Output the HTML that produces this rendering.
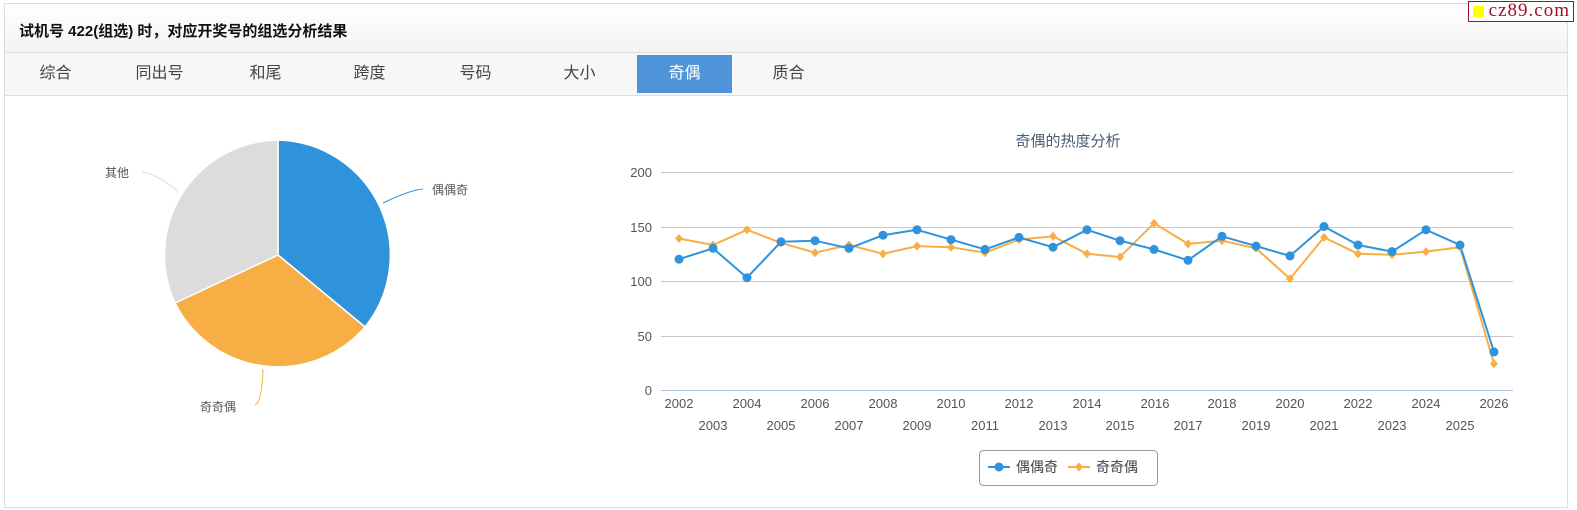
<!DOCTYPE html>
<html><head><meta charset="utf-8"><style>
body{margin:0;width:1577px;height:510px;background:#fff;font-family:"Liberation Sans","Noto Sans CJK SC",sans-serif;position:relative;overflow:hidden}
.box{position:absolute;left:4px;top:3px;width:1562px;height:503px;border:1px solid #ddd;}
.hd{position:absolute;left:0;top:0;width:1562px;height:48px;background:linear-gradient(#fff,#f3f3f3);border-bottom:1px solid #ddd}
.hd b{position:absolute;left:14px;top:16px;font-size:15px;color:#111}
.tabs{position:absolute;left:0;top:49px;width:1562px;height:42px;background:#f7f7f7;border-bottom:1px solid #ddd}
.tabs span{position:absolute;top:2px;height:38px;line-height:38px;font-size:16px;color:#444;text-align:center;width:95px}
.tabs .on{background:#4f94d8;color:#fff}
.logo{position:absolute;right:3px;top:1px;border:1px solid #a0102a;background:#fff;color:#a0102a;font-family:"Liberation Serif",serif;font-size:19px;height:19px;line-height:18px;padding:0 3px 0 20px;letter-spacing:1px}
.logo i{position:absolute;left:4px;top:4px;width:11px;height:11px;background:#ff0}
</style></head><body>
<div class="box">
<div class="hd"><b>试机号 422(组选) 时，对应开奖号的组选分析结果</b></div>
<div class="tabs">
<span style="left:3px">综合</span><span style="left:107px">同出号</span><span style="left:213px">和尾</span><span style="left:317px">跨度</span><span style="left:423px">号码</span><span style="left:527px">大小</span><span class="on" style="left:632px">奇偶</span><span style="left:736px">质合</span>
</div>
</div>
<div class="logo"><i></i>cz89.com</div>
<svg width="1577" height="510" style="position:absolute;left:0;top:0" font-family="Liberation Sans, Noto Sans CJK SC, sans-serif">
<path d="M278 255 L278 140 A115 115 0 0 1 365 327 Z" fill="#2e93db" stroke="#fff" stroke-width="1.5"/>
<path d="M278 255 L365 327 A115 115 0 0 1 175 303 Z" fill="#f6ae45" stroke="#fff" stroke-width="1.5"/>
<path d="M278 255 L175 303 A115 115 0 0 1 278 140 Z" fill="#dcdcdc" stroke="#fff" stroke-width="1.5"/>
<path d="M383 203 Q410 190 423 189" fill="none" stroke="#2e93db"/>
<path d="M263 369 Q262 402 255 405" fill="none" stroke="#f6ae45"/>
<path d="M178 191 Q155 173 142 172" fill="none" stroke="#ddd"/>
<g font-size="12" fill="#555"><text x="432" y="194">偶偶奇</text><text x="200" y="411">奇奇偶</text><text x="105" y="177">其他</text></g>
<text x="1068" y="146" font-size="15" fill="#4a5d75" text-anchor="middle">奇偶的热度分析</text>
<g stroke="#c8c8c8"><line x1="661" x2="1513" y1="172.5" y2="172.5"/><line x1="661" x2="1513" y1="227.5" y2="227.5"/><line x1="661" x2="1513" y1="281.5" y2="281.5"/><line x1="661" x2="1513" y1="336.5" y2="336.5"/></g>
<line x1="661" x2="1513" y1="390.5" y2="390.5" stroke="#a9c3dd"/>
<g font-size="13" fill="#555" text-anchor="end"><text x="652" y="177">200</text><text x="652" y="232">150</text><text x="652" y="286">100</text><text x="652" y="341">50</text><text x="652" y="395">0</text></g>
<g font-size="13" fill="#555" text-anchor="middle">
<text x="679" y="408">2002</text><text x="747" y="408">2004</text><text x="815" y="408">2006</text><text x="883" y="408">2008</text><text x="951" y="408">2010</text><text x="1019" y="408">2012</text><text x="1087" y="408">2014</text><text x="1155" y="408">2016</text><text x="1222" y="408">2018</text><text x="1290" y="408">2020</text><text x="1358" y="408">2022</text><text x="1426" y="408">2024</text><text x="1494" y="408">2026</text>
<text x="713" y="430">2003</text><text x="781" y="430">2005</text><text x="849" y="430">2007</text><text x="917" y="430">2009</text><text x="985" y="430">2011</text><text x="1053" y="430">2013</text><text x="1120" y="430">2015</text><text x="1188" y="430">2017</text><text x="1256" y="430">2019</text><text x="1324" y="430">2021</text><text x="1392" y="430">2023</text><text x="1460" y="430">2025</text>
</g>
<polyline fill="none" stroke="#f6ae45" stroke-width="2" stroke-linejoin="round" points="679,238.5 713,245 747,229.8 781,242.9 815,252.7 849,245 883,253.8 917,246.1 951,247.2 985,252.7 1019,239.6 1053,236.3 1087,253.8 1120,257 1154,223.2 1188,243.9 1222,240.7 1256,248.3 1290,278.8 1324,237.4 1358,253.8 1392,254.8 1426,251.6 1460,247.2 1494,363.8"/>
<polyline fill="none" stroke="#2e93db" stroke-width="2" stroke-linejoin="round" points="679,259.2 713,248.3 747,277.7 781,241.8 815,240.7 849,248.3 883,235.2 917,229.8 951,239.6 985,249.4 1019,237.4 1053,247.2 1087,229.8 1120,240.7 1154,249.4 1188,260.3 1222,236.3 1256,246.1 1290,255.9 1324,226.5 1358,245 1392,251.6 1426,229.8 1460,245 1494,351.9"/>
<g fill="#f6ae45">
<path d="M679 234l4 4.5-4 4.5-4-4.5z"/><path d="M713 240.5l4 4.5-4 4.5-4-4.5z"/><path d="M747 225.3l4 4.5-4 4.5-4-4.5z"/><path d="M781 238.4l4 4.5-4 4.5-4-4.5z"/><path d="M815 248.2l4 4.5-4 4.5-4-4.5z"/><path d="M849 240.5l4 4.5-4 4.5-4-4.5z"/><path d="M883 249.3l4 4.5-4 4.5-4-4.5z"/><path d="M917 241.6l4 4.5-4 4.5-4-4.5z"/><path d="M951 242.7l4 4.5-4 4.5-4-4.5z"/><path d="M985 248.2l4 4.5-4 4.5-4-4.5z"/><path d="M1019 235.1l4 4.5-4 4.5-4-4.5z"/><path d="M1053 231.8l4 4.5-4 4.5-4-4.5z"/><path d="M1087 249.3l4 4.5-4 4.5-4-4.5z"/><path d="M1120 252.5l4 4.5-4 4.5-4-4.5z"/><path d="M1154 218.7l4 4.5-4 4.5-4-4.5z"/><path d="M1188 239.4l4 4.5-4 4.5-4-4.5z"/><path d="M1222 236.2l4 4.5-4 4.5-4-4.5z"/><path d="M1256 243.8l4 4.5-4 4.5-4-4.5z"/><path d="M1290 274.3l4 4.5-4 4.5-4-4.5z"/><path d="M1324 232.9l4 4.5-4 4.5-4-4.5z"/><path d="M1358 249.3l4 4.5-4 4.5-4-4.5z"/><path d="M1392 250.3l4 4.5-4 4.5-4-4.5z"/><path d="M1426 247.1l4 4.5-4 4.5-4-4.5z"/><path d="M1460 242.7l4 4.5-4 4.5-4-4.5z"/><path d="M1494 359.3l4 4.5-4 4.5-4-4.5z"/>
</g>
<g fill="#2e93db">
<circle cx="679" cy="259.2" r="4.5"/><circle cx="713" cy="248.3" r="4.5"/><circle cx="747" cy="277.7" r="4.5"/><circle cx="781" cy="241.8" r="4.5"/><circle cx="815" cy="240.7" r="4.5"/><circle cx="849" cy="248.3" r="4.5"/><circle cx="883" cy="235.2" r="4.5"/><circle cx="917" cy="229.8" r="4.5"/><circle cx="951" cy="239.6" r="4.5"/><circle cx="985" cy="249.4" r="4.5"/><circle cx="1019" cy="237.4" r="4.5"/><circle cx="1053" cy="247.2" r="4.5"/><circle cx="1087" cy="229.8" r="4.5"/><circle cx="1120" cy="240.7" r="4.5"/><circle cx="1154" cy="249.4" r="4.5"/><circle cx="1188" cy="260.3" r="4.5"/><circle cx="1222" cy="236.3" r="4.5"/><circle cx="1256" cy="246.1" r="4.5"/><circle cx="1290" cy="255.9" r="4.5"/><circle cx="1324" cy="226.5" r="4.5"/><circle cx="1358" cy="245" r="4.5"/><circle cx="1392" cy="251.6" r="4.5"/><circle cx="1426" cy="229.8" r="4.5"/><circle cx="1460" cy="245" r="4.5"/><circle cx="1494" cy="351.9" r="4.5"/>
</g>
<rect x="979.5" y="450.5" width="178" height="35" rx="4" fill="#fff" stroke="#999"/>
<line x1="988" x2="1010" y1="467" y2="467" stroke="#2e93db" stroke-width="2"/><circle cx="999" cy="467" r="4.5" fill="#2e93db"/>
<text x="1016" y="472" font-size="14" fill="#444">偶偶奇</text>
<line x1="1068" x2="1090" y1="467" y2="467" stroke="#f6ae45" stroke-width="2"/><path d="M1079 462.5l4 4.5-4 4.5-4-4.5z" fill="#f6ae45"/>
<text x="1096" y="472" font-size="14" fill="#444">奇奇偶</text>
</svg>
</body></html>
